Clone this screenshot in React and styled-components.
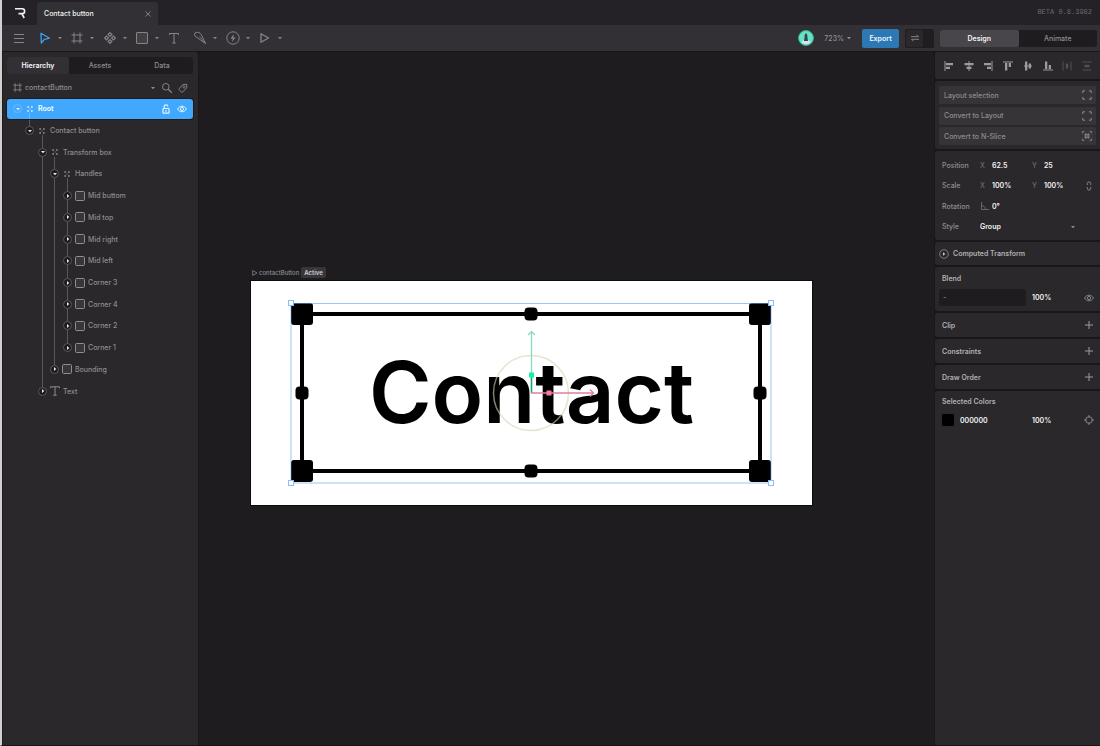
import React from 'react';
import styled, { createGlobalStyle, css } from 'styled-components';

const GlobalStyle = createGlobalStyle`
  * {
    box-sizing: border-box;
  }

  body {
    margin: 0;
    background-color: #1e1c1f;
    color: #8e8d90;
    font-family: Inter, 'Liberation Sans', sans-serif;
    font-size: 7px;
    font-weight: 500;
    line-height: 11px;
  }

  button, input, select {
    appearance: none;
    background: none;
    border: 0;
    border-radius: 0;
    color: inherit;
    font: inherit;
    margin: 0;
    outline: none;
    padding: 0;
  }

  svg {
    display: block;
    flex: none;
  }
`;

/* ---------- icons ---------- */

const stroke = { fill: 'none', stroke: 'currentColor', strokeWidth: 1 };

const ICONS = {
  menu: [14, <path d="M2 3.500h10M2 7.500h10M2 11.500h10" {...stroke} />],
  cursor: [14, <path d="M3 2.200l8.500 5-5 1.100L3.300 12z" {...stroke} strokeWidth="1.300" strokeLinejoin="round" />],
  frame: [14, <path d="M4 1.500v11M10 1.500v11M1.500 4h11M1.500 10h11" {...stroke} />],
  component: [
    14,
    <path
      d="M7 1.600l1.900 1.900L7 5.400 5.100 3.500zM7 8.600l1.900 1.900L7 12.400l-1.900-1.900zM3.500 5.100l1.900 1.900-1.900 1.900L1.600 7zM10.500 5.100l1.900 1.900-1.900 1.900L8.600 7z"
      {...stroke}
      strokeWidth="1.200"
    />,
  ],
  rect: [14, <rect x="1.500" y="1.500" width="11" height="11" rx="0.500" {...stroke} fill="#424043" />],
  text: [14, <path d="M2.500 4V2.500h9V4M7 2.500v9.500M5.300 12h3.400" {...stroke} />],
  pen: [
    14,
    <>
      <path
        d="M12.500 12.500L8.200 3.500C7.200 1.500 4.500 1 3 1.500 1.200 2.100 1 3.900 2.200 5.200z"
        {...stroke}
        strokeLinejoin="round"
      />
      <path d="M12.500 12.500L6.500 5.500" {...stroke} strokeWidth="0.800" />
    </>,
  ],
  bolt: [
    14,
    <>
      <circle cx="7" cy="7" r="6.200" {...stroke} />
      <path d="M7.900 3L4.500 7.600h2.200L6.100 11l3.400-4.600H7.300z" fill="currentColor" />
    </>,
  ],
  play: [14, <path d="M3 2.700v8.600L10.500 7z" {...stroke} strokeWidth="1.300" strokeLinejoin="round" />],
  caret: [6, <path d="M1 2h4L3 4.300z" fill="currentColor" />],
  close: [8, <path d="M1.500 1.500l5 5M6.500 1.500l-5 5" {...stroke} strokeWidth="0.900" />],
  swap: [10, <path d="M1 3.700h7.500L6.700 2M9 6.300H1.500L3.300 8" {...stroke} />],
  search: [
    12,
    <>
      <circle cx="4.800" cy="4.800" r="3.300" {...stroke} />
      <path d="M7.300 7.300l3.500 3.500" {...stroke} strokeWidth="1.300" />
    </>,
  ],
  tag: [
    10,
    <>
      <path d="M4.800 1.600l3.800-.4.200 3.500-4 4.200c-.5.500-1 .500-1.500 0L1.400 7c-.5-.5-.5-1 0-1.500z" {...stroke} strokeLinejoin="round" />
      <circle cx="6" cy="4" r="1.100" {...stroke} strokeWidth="0.800" />
    </>,
  ],
  unlock: [
    10,
    <>
      <rect x="2" y="4.500" width="6" height="4.700" rx="0.500" {...stroke} strokeWidth="1.200" />
      <path d="M3.200 4.500V2.500c0-2.300 3.600-2.300 3.600 0M5 6v1.700" {...stroke} strokeWidth="1.200" />
    </>,
  ],
  eye: [
    10,
    <>
      <path d="M.6 5C2.300 1.300 7.700 1.300 9.400 5 7.700 8.700 2.300 8.700.6 5z" {...stroke} />
      <circle cx="5" cy="5" r="1.600" {...stroke} />
    </>,
  ],
  group: [
    10,
    <path
      d="M2.300 2.300h1.700v1.500H2.300zM6 2.300h1.700v1.500H6zM2.300 6.200h1.700v1.500H2.300zM6 6.200h1.700v1.500H6zM4.500 4.500h1v1h-1z"
      fill="currentColor"
    />,
  ],
  shape: [10, <rect x="0.500" y="0.500" width="9" height="9" rx="1" {...stroke} fill="#38363a" />],
  glyph: [10, <path d="M.6 2.200V.8h8.800v1.400M5 .8v8.400M3.300 9.200h3.400" {...stroke} />],
  bracket: [10, <path d="M3 .8H.8V3M7 .8h2.200V3M3 9.200H.8V7M7 9.200h2.200V7" {...stroke} />],
  slice: [
    10,
    <path
      d="M2.300 .6H.6v1.700M7.700 .6h1.700v1.700M2.300 9.400H.6V7.700M7.700 9.400h1.700V7.700M3.800 2.200v5.600M6.200 2.200v5.600M2.200 3.800h5.600M2.200 6.200h5.600"
      {...stroke}
      strokeWidth="0.900"
    />,
  ],
  link: [10, <path d="M3.300 4V2.200c0-1.700 3.400-1.700 3.400 0V4M3.300 6v1.800c0 1.700 3.400 1.700 3.400 0V6" {...stroke} />],
  angle: [10, <path d="M1.500 1v7.500H9M1.500 4.500c2.400.2 3.800 1.600 4 4" {...stroke} strokeWidth="0.900" />],
  plus: [10, <path d="M5 1v8M1 5h8" {...stroke} />],
  target: [
    10,
    <>
      <circle cx="5" cy="5" r="3.300" {...stroke} />
      <path d="M5 0v2.400M5 7.600V10M0 5h2.400M7.600 5H10" {...stroke} />
    </>,
  ],
  alignLeft: [10, <path d="M.5 0h1v10h-1zM2 2h7v2.300H2zM2 5.700h4V8H2z" fill="currentColor" />],
  alignCenter: [10, <path d="M4.500 0h1v10h-1zM.5 2h9v2.300h-9zM2.500 5.700h5V8h-5z" fill="currentColor" />],
  alignRight: [10, <path d="M8.500 0h1v10h-1zM1 2h7v2.300H1zM4 5.700h4V8H4z" fill="currentColor" />],
  alignTop: [10, <path d="M0 .5h10v1H0zM2 2h2.300v7.500H2zM5.700 2H8v4H5.700z" fill="currentColor" />],
  alignMiddle: [10, <path d="M1 4.500h8v1H1zM2 .5h2.300v9H2zM5.700 2.500H8v5H5.700z" fill="currentColor" />],
  alignBottom: [10, <path d="M0 8.500h10v1H0zM2 .5h2.300V8H2zM5.700 4H8v4H5.700z" fill="currentColor" />],
  spreadX: [10, <path d="M.5 .5h1v9h-1zM8.500 .5h1v9h-1zM3.800 2.500h2.400v5H3.800z" fill="currentColor" />],
  spreadY: [10, <path d="M.5 .5h9v1h-9zM.5 8.500h9v1h-9zM2.500 3.800h5v2.400h-5z" fill="currentColor" />],
};

const Icon = ({ name, size }) => {
  const [box, drawing] = ICONS[name];
  return (
    <svg width={size || box} height={size || box} viewBox={`0 0 ${box} ${box}`} aria-hidden="true">
      {drawing}
    </svg>
  );
};

/* ---------- shell ---------- */

const Shell = styled.div`
  display: grid;
  grid-template-rows: 25px 26px 1fr;

  background-color: #19171a;
  border-bottom: 1px solid #1c1218;
  border-left: 2px solid #cfd0cf;
  height: 100vh;
  overflow: hidden;
`;

const TitleBar = styled.header`
  display: flex;
  align-items: center;

  background-color: #242226;
  padding-right: 8px;
`;

const Logo = styled.div`
  padding: 0 11px 0 12px;
`;

const FileTab = styled.div`
  display: flex;
  align-items: center;
  align-self: flex-end;
  justify-content: space-between;

  background-color: #323034;
  border-radius: 3px 3px 0 0;
  color: #f1f1f1;
  height: 23px;
  padding: 0 6px 0 7px;
  width: 121px;
`;

const Version = styled.span`
  color: #6a686b;
  font-family: 'Liberation Mono', monospace;
  margin-left: auto;
`;

const IconButton = styled.button`
  display: flex;
  align-items: center;
  justify-content: center;

  color: ${({ $color }) => $color || '#858487'};
  opacity: ${({ $faint }) => ($faint ? 0.35 : 1)};
`;

const Toolbar = styled.div`
  display: flex;
  align-items: center;

  background-color: #323034;
  padding: 0 3px 0 10px;
`;

const Tools = styled.div`
  display: flex;
  justify-content: space-between;

  margin-left: 12px;
  width: 246px;
`;

const Tool = styled.button`
  display: flex;
  align-items: center;
  gap: 5px;

  color: ${({ $active }) => ($active ? '#3e9fe8' : '#858487')};
  width: ${({ $menu }) => ($menu ? '26px' : '20px')};

  svg + svg {
    color: #858487;
  }
`;

const ToolbarEnd = styled.div`
  display: flex;
  align-items: center;
  gap: 6px;

  margin-left: auto;
`;

const Zoom = styled.button`
  display: flex;
  align-items: center;
  gap: 2px;

  margin: 0 4px;
`;

const ExportButton = styled.button`
  background-color: #2b78b4;
  border-radius: 2px;
  color: #f4f8fb;
  font-weight: 600;
  height: 19px;
  width: 37px;
`;

const Toggle = styled.button`
  display: flex;

  background-color: #1f1d20;
  border: 1px solid #1f1d20;
  border-radius: 2px;
  color: #858487;
  height: 19px;
  width: 29px;
`;

const ToggleKnob = styled.span`
  display: flex;
  align-items: center;
  justify-content: center;

  background-color: #2a282b;
  border-radius: 2px;
  height: 100%;
  width: 17px;
`;

const Segments = styled.div`
  display: grid;
  grid-auto-columns: 1fr;
  grid-auto-flow: column;

  background-color: #1e1c1f;
  border-radius: 2px;
  height: 17px;
  width: ${({ $width }) => $width || 'auto'};
`;

const Segment = styled.button`
  border-radius: 2px;
  color: #8e8d90;

  ${({ $active, $tone }) =>
    $active &&
    css`
      background-color: ${$tone};
      color: #f4f4f4;
      font-weight: 600;
    `}
`;

const Workspace = styled.div`
  display: grid;
  grid-template-columns: 196px minmax(0, 1fr) 165px;
  column-gap: 1px;

  min-height: 0;
  padding-top: 1px;
`;

/* ---------- hierarchy ---------- */

const Sidebar = styled.aside`
  background-color: #2a282b;
  border-left: 1px solid #1b1f1b;
  border-radius: 0 3px 0 0;
  padding: 5px 5px 0 4px;
`;

const SourceRow = styled.div`
  display: flex;
  align-items: center;
  gap: 5px;

  height: 24px;
  padding: 3px 5px 0 5px;
`;

const SourceButton = styled.button`
  display: flex;
  align-items: center;
  flex: 1;
  gap: 2px;

  svg:last-child {
    margin-left: auto;
  }
`;

const Tree = styled.ul`
  display: grid;
  grid-auto-rows: 1fr;

  height: 304px;
  list-style: none;
  margin: 0;
  padding: 0;
`;

const TreeRow = styled.li`
  display: flex;
  align-items: center;

  padding-left: ${({ $indent }) => $indent}px;
  position: relative;

  ${({ $selected }) =>
    $selected &&
    css`
      background-color: #40a9ff;
      border-radius: 3px;
      box-shadow: 0 0 0 1px #241a17;
      color: #ffffff;
      font-weight: 600;
      margin: 1px 0;
    `}
`;

const GUIDE_PARTS = {
  full: 'top: 0; bottom: 0;',
  top: 'top: 0; bottom: 50%;',
  bottom: 'top: 70%; bottom: 0;',
};

const Guide = styled.span`
  background-color: rgba(255, 255, 255, 0.22);
  left: ${({ $left }) => $left}px;
  position: absolute;
  width: 1px;
  ${({ $part }) => GUIDE_PARTS[$part]}
`;

const Expander = styled.button`
  display: flex;
  align-items: center;
  justify-content: center;

  background-color: ${({ $selected }) => ($selected ? '#40a9ff' : '#1d1b1e')};
  border: 1px solid ${({ $selected }) => ($selected ? '#6bbcff' : '#5a585c')};
  border-radius: 50%;
  color: #e8e8e8;
  flex: none;
  height: 9px;
  margin-left: 6px;
  position: relative;
  width: 9px;

  svg {
    transform: ${({ $closed }) => ($closed ? 'rotate(-90deg)' : 'none')};
  }
`;

const NodeIcon = styled.span`
  color: ${({ $selected }) => ($selected ? '#d9eeff' : '#8e8d90')};
  margin: 0 3px;
`;

const RowActions = styled.span`
  display: flex;
  gap: 6px;

  margin-left: auto;
  padding-right: 6px;
`;

const INDENTS = [0, 12, 25, 37, 50];

const NODES = [
  { name: 'Root', icon: 'group', depth: 0, open: true, selected: true },
  { name: 'Contact button', icon: 'group', depth: 1, open: true },
  { name: 'Transform box', icon: 'group', depth: 2, open: true },
  { name: 'Handles', icon: 'group', depth: 3, open: true },
  { name: 'Mid buttom', icon: 'shape', depth: 4 },
  { name: 'Mid top', icon: 'shape', depth: 4 },
  { name: 'Mid right', icon: 'shape', depth: 4 },
  { name: 'Mid left', icon: 'shape', depth: 4 },
  { name: 'Corner 3', icon: 'shape', depth: 4 },
  { name: 'Corner 4', icon: 'shape', depth: 4 },
  { name: 'Corner 2', icon: 'shape', depth: 4 },
  { name: 'Corner 1', icon: 'shape', depth: 4 },
  { name: 'Bounding', icon: 'shape', depth: 3 },
  { name: 'Text', icon: 'glyph', depth: 2 },
];

// True while another node of this depth follows under the same parent.
const continues = (index, depth) => {
  const next = NODES.slice(index + 1).find(node => node.depth <= depth);
  return Boolean(next) && next.depth === depth;
};

const guidesFor = (node, index) => {
  const guides = [];
  for (let depth = 1; depth <= node.depth; depth += 1) {
    if (continues(index, depth)) {
      guides.push({ depth, part: 'full' });
    } else if (depth === node.depth) {
      guides.push({ depth, part: 'top' });
    }
  }
  if (node.open) {
    guides.push({ depth: node.depth + 1, part: 'bottom' });
  }
  return guides;
};

const Hierarchy = () => (
  <Sidebar>
    <Segments>
      <Segment $active $tone="#323034">
        Hierarchy
      </Segment>
      <Segment>Assets</Segment>
      <Segment>Data</Segment>
    </Segments>
    <SourceRow>
      <SourceButton>
        <Icon name="frame" size={11} />
        contactButton
        <Icon name="caret" />
      </SourceButton>
      <IconButton aria-label="Search">
        <Icon name="search" />
      </IconButton>
      <IconButton aria-label="Tags">
        <Icon name="tag" />
      </IconButton>
    </SourceRow>
    <Tree>
      {NODES.map((node, index) => (
        <TreeRow key={node.name} $indent={INDENTS[node.depth]} $selected={node.selected}>
          {guidesFor(node, index).map(({ depth, part }) => (
            <Guide key={depth} $left={INDENTS[depth] + 10} $part={part} />
          ))}
          <Expander $closed={!node.open} $selected={node.selected} aria-label={`Toggle ${node.name}`}>
            <Icon name="caret" />
          </Expander>
          <NodeIcon $selected={node.selected}>
            <Icon name={node.icon} />
          </NodeIcon>
          {node.name}
          {node.selected && (
            <RowActions>
              <IconButton $color="#e6f4ff" aria-label="Unlock">
                <Icon name="unlock" />
              </IconButton>
              <IconButton $color="#e6f4ff" aria-label="Hide">
                <Icon name="eye" />
              </IconButton>
            </RowActions>
          )}
        </TreeRow>
      ))}
    </Tree>
  </Sidebar>
);

/* ---------- canvas ---------- */

const Canvas = styled.main`
  background-color: #1e1c1f;
  border-radius: 3px 3px 0 0;
  overflow: hidden;
  position: relative;
`;

// The artboard sits on a free canvas, so it carries its own position.
const Artboard = styled.section`
  left: 52px;
  position: absolute;
  top: 214px;
  width: 561px;
`;

const ArtboardLabel = styled.div`
  display: flex;
  align-items: center;

  font-size: 6px;
  height: 15px;
  padding-bottom: 2px;
`;

const ActiveBadge = styled.span`
  background-color: #38363a;
  border-radius: 2px;
  color: #d5d5d6;
  font-weight: 600;
  margin-left: 2px;
  padding: 0 3px;
`;

const ArtboardSurface = styled.div`
  display: flex;
  align-items: center;
  justify-content: center;

  background-color: #ffffff;
  box-shadow: 0 0 0 1px #0c0b0d;
  height: 224px;
  position: relative;
`;

const ArtboardText = styled.span`
  color: #000000;
  font-size: 85px;
  font-weight: 600;
  line-height: 96px;
`;

const Overlay = styled.svg`
  left: 0;
  position: absolute;
  top: 0;
`;

const CORNERS = [[51, 33], [509, 33], [51, 190], [509, 190]];
const MIDS = [[280, 33], [280, 190], [51, 112], [509, 112]];
const SELECTION = [[40, 22], [520, 22], [40, 202], [520, 202]];

const Stage = () => (
  <Canvas>
    <Artboard>
      <ArtboardLabel>
        <Icon name="play" size={8} />
        contactButton
        <ActiveBadge>Active</ActiveBadge>
      </ArtboardLabel>
      <ArtboardSurface>
        <ArtboardText>Contact</ArtboardText>
        <Overlay width="561" height="224" viewBox="0 0 561 224">
          <rect x="51" y="33" width="458" height="157" fill="none" stroke="#000" strokeWidth="4" />
          {CORNERS.map(([x, y]) => (
            <rect key={`${x}-${y}`} x={x - 11} y={y - 11} width="22" height="22" rx="3" />
          ))}
          {MIDS.map(([x, y]) => (
            <rect key={`${x}-${y}`} x={x - 6.5} y={y - 6.5} width="13" height="13" rx="4" />
          ))}
          <rect x="40" y="22.500" width="480" height="179.500" fill="none" stroke="#5b9ff0" strokeOpacity="0.600" />
          {SELECTION.map(([x, y]) => (
            <rect key={`${x}-${y}`} x={x - 2.5} y={y - 2.5} width="5" height="5" fill="#fff" stroke="#8dbcf7" />
          ))}
          <circle cx="280" cy="112" r="37.500" fill="none" stroke="#d9cfb0" strokeOpacity="0.600" strokeWidth="1.500" />
          <path d="M280.500 112V93" stroke="#17a877" strokeWidth="1.600" />
          <path d="M280.500 93V51M277 54l3.500-3.500L284 54" fill="none" stroke="#8fdcbc" strokeWidth="1.400" />
          <rect x="278" y="91.500" width="5" height="5" fill="#16f0a0" />
          <path d="M280 112h62M339 108.500l3.500 3.500-3.500 3.500" fill="none" stroke="#e0809c" strokeWidth="1.300" />
          <rect x="295.500" y="109.500" width="5" height="5" fill="#f57c9c" />
        </Overlay>
      </ArtboardSurface>
    </Artboard>
  </Canvas>
);

/* ---------- inspector ---------- */

const Panel = styled.aside`
  display: flex;
  flex-direction: column;
  gap: 2px;

  min-height: 0;
`;

const Section = styled.section`
  background-color: #2a282b;
  border-radius: 3px 0 0 3px;
`;

const AlignSection = styled(Section)`
  display: flex;
  align-items: center;
  justify-content: space-between;

  color: #9b9a9d;
  height: 27px;
  padding: 0 8px 0 9px;
`;

const ActionSection = styled(Section)`
  display: grid;
  align-content: space-between;

  height: 68px;
  padding: 5px 4px 4px;
`;

const ActionButton = styled.button`
  display: flex;
  align-items: center;
  justify-content: space-between;

  background-color: #363437;
  border-radius: 2px;
  height: 18px;
  padding: 0 4px 0 5px;
`;

const PropertySection = styled(Section)`
  display: grid;
  grid-auto-rows: 1fr;

  height: 89px;
  padding: 4px 5px 3px 7px;
`;

const PropertyRow = styled.div`
  display: grid;
  grid-template-columns: 38px 12px 40px 12px minmax(0, 1fr) 12px;
  align-items: center;
`;

const Axis = styled.label`
  color: #6d6b6f;
`;

const Field = styled.input`
  color: #f4f4f4;
  font-weight: 600;
  min-width: 0;
  width: 100%;
`;

const StyleField = styled.span`
  display: flex;
  align-items: center;

  grid-column: 2 / 6;
  padding-right: 7px;
`;

const StyleSelect = styled.select`
  color: #f4f4f4;
  flex: 1;
  font-weight: 600;
`;

const CollapsedSection = styled(Section)`
  display: flex;
  align-items: center;
  gap: 4px;

  height: 23px;
  padding-left: 4px;
`;

const SectionTitle = styled.h2`
  color: #b1b0b3;
  font-size: 7px;
  font-weight: 600;
  margin: 0;
`;

const BlendSection = styled(Section)`
  height: 44px;
  padding: 6px 5px 0 4px;

  ${SectionTitle} {
    padding-left: 3px;
  }
`;

const BlendRow = styled.div`
  display: grid;
  grid-template-columns: 87px minmax(0, 1fr) 12px;
  align-items: center;
  column-gap: 6px;

  margin-top: 5px;
`;

const BlendSelect = styled.select`
  background-color: #1e1c1f;
  border-radius: 2px;
  height: 17px;
  padding-left: 4px;
`;

const AddSection = styled(Section)`
  display: flex;
  align-items: center;
  justify-content: space-between;

  height: 24px;
  padding: 0 6px 0 7px;
`;

const ColorSection = styled(Section)`
  flex: 1;
  padding: 5px 5px 0 7px;
`;

const ColorRow = styled.div`
  display: grid;
  grid-template-columns: 12px minmax(0, 1fr) 45px 12px;
  align-items: center;
  column-gap: 6px;

  margin-top: 7px;
`;

const Swatch = styled.button`
  background-color: #000000;
  border-radius: 1px;
  height: 12px;
`;

const ALIGNMENTS = ['alignLeft', 'alignCenter', 'alignRight', 'alignTop', 'alignMiddle', 'alignBottom', 'spreadX', 'spreadY'];

const ACTIONS = [
  { label: 'Layout selection', icon: 'bracket' },
  { label: 'Convert to Layout', icon: 'bracket' },
  { label: 'Convert to N-Slice', icon: 'slice' },
];

const Inspector = () => (
  <Panel>
    <AlignSection>
      {ALIGNMENTS.map(name => (
        <IconButton key={name} $color="#9b9a9d" $faint={name.startsWith('spread')} aria-label={name}>
          <Icon name={name} />
        </IconButton>
      ))}
    </AlignSection>
    <ActionSection>
      {ACTIONS.map(({ label, icon }) => (
        <ActionButton key={label}>
          {label}
          <Icon name={icon} />
        </ActionButton>
      ))}
    </ActionSection>
    <PropertySection>
      <PropertyRow>
        <span>Position</span>
        <Axis htmlFor="position-x">X</Axis>
        <Field id="position-x" defaultValue="62.5" />
        <Axis htmlFor="position-y">Y</Axis>
        <Field id="position-y" defaultValue="25" />
      </PropertyRow>
      <PropertyRow>
        <span>Scale</span>
        <Axis htmlFor="scale-x">X</Axis>
        <Field id="scale-x" defaultValue="100%" />
        <Axis htmlFor="scale-y">Y</Axis>
        <Field id="scale-y" defaultValue="100%" />
        <IconButton aria-label="Link scale">
          <Icon name="link" />
        </IconButton>
      </PropertyRow>
      <PropertyRow>
        <label htmlFor="rotation">Rotation</label>
        <Axis htmlFor="rotation">
          <Icon name="angle" />
        </Axis>
        <Field id="rotation" defaultValue="0°" />
      </PropertyRow>
      <PropertyRow>
        <label htmlFor="style">Style</label>
        <StyleField>
          <StyleSelect id="style">
            <option>Group</option>
          </StyleSelect>
          <Icon name="caret" />
        </StyleField>
      </PropertyRow>
    </PropertySection>
    <CollapsedSection>
      <IconButton $color="#c9c8ca" aria-label="Expand computed transform">
        <svg width="10" height="10" viewBox="0 0 10 10">
          <circle cx="5" cy="5" r="4.300" fill="none" stroke="#858487" strokeWidth="0.900" />
          <path d="M4 3.200v3.600L6.300 5z" fill="currentColor" />
        </svg>
      </IconButton>
      <SectionTitle>Computed Transform</SectionTitle>
    </CollapsedSection>
    <BlendSection>
      <SectionTitle>Blend</SectionTitle>
      <BlendRow>
        <BlendSelect aria-label="Blend mode">
          <option>-</option>
        </BlendSelect>
        <Field aria-label="Blend opacity" defaultValue="100%" />
        <IconButton aria-label="Toggle visibility">
          <Icon name="eye" />
        </IconButton>
      </BlendRow>
    </BlendSection>
    {['Clip', 'Constraints', 'Draw Order'].map(title => (
      <AddSection key={title}>
        <SectionTitle>{title}</SectionTitle>
        <IconButton $color="#9b9a9d" aria-label={`Add ${title}`}>
          <Icon name="plus" />
        </IconButton>
      </AddSection>
    ))}
    <ColorSection>
      <SectionTitle>Selected Colors</SectionTitle>
      <ColorRow>
        <Swatch aria-label="Black" />
        <Field aria-label="Color hex" defaultValue="000000" />
        <Field aria-label="Color opacity" defaultValue="100%" />
        <IconButton aria-label="Select objects">
          <Icon name="target" />
        </IconButton>
      </ColorRow>
    </ColorSection>
  </Panel>
);

const TOOLS = [
  { name: 'cursor', menu: true, active: true },
  { name: 'frame', menu: true },
  { name: 'component', menu: true },
  { name: 'rect', menu: true },
  { name: 'text' },
  { name: 'pen', menu: true },
  { name: 'bolt', menu: true },
  { name: 'play', menu: true },
];

const App = () => (
  <Shell>
    <GlobalStyle />
    <TitleBar>
      <Logo>
        <svg width="12" height="12" viewBox="0 0 12 12" aria-label="Rive">
          <path d="M1 1.800h7.200a2.300 2.300 0 0 1 0 4.800H4.500M7.800 6.600l2.400 4.400" fill="none" stroke="#f4f4f4" strokeWidth="1.600" />
        </svg>
      </Logo>
      <FileTab>
        Contact button
        <IconButton aria-label="Close file">
          <Icon name="close" />
        </IconButton>
      </FileTab>
      <Version>BETA 0.8.3982</Version>
    </TitleBar>
    <Toolbar>
      <IconButton aria-label="Menu">
        <Icon name="menu" />
      </IconButton>
      <Tools>
        {TOOLS.map(({ name, menu, active }) => (
          <Tool key={name} $menu={menu} $active={active} aria-label={name}>
            <Icon name={name} />
            {menu && <Icon name="caret" />}
          </Tool>
        ))}
      </Tools>
      <ToolbarEnd>
        <svg width="16" height="16" viewBox="0 0 16 16" aria-label="Account">
          <circle cx="8" cy="8" r="7.500" fill="#63e3bf" stroke="#35a98a" />
          <path d="M3.500 12.500C4.500 10 6 9.800 8 9.800s3.500.2 4.500 2.700a6.500 6.500 0 0 1-9 0z" fill="#d9e4e4" />
          <path d="M8 3.500c1.300 0 1.400 2 1.400 3.200 0 1.600.4 2.500.6 4.300H6c.2-1.800.6-2.700.6-4.300 0-1.200.1-3.200 1.400-3.200z" fill="#3a3f5c" />
        </svg>
        <Zoom>
          723%
          <Icon name="caret" />
        </Zoom>
        <ExportButton>Export</ExportButton>
        <Toggle aria-label="Developer mode">
          <ToggleKnob>
            <Icon name="swap" />
          </ToggleKnob>
        </Toggle>
        <Segments $width="157px">
          <Segment $active $tone="#48464a">
            Design
          </Segment>
          <Segment>Animate</Segment>
        </Segments>
      </ToolbarEnd>
    </Toolbar>
    <Workspace>
      <Hierarchy />
      <Stage />
      <Inspector />
    </Workspace>
  </Shell>
);

export default App;
